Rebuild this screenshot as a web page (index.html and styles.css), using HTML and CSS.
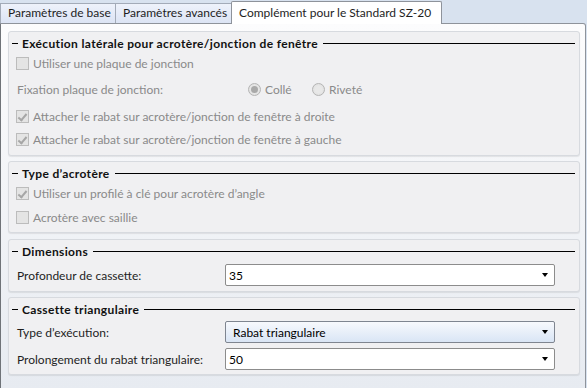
FILE: index.html
```html
<!DOCTYPE html>
<html lang="fr">
<head>
    <meta charset="UTF-8">
    <title>Complément pour le Standard SZ-20</title>
    <link rel="stylesheet" href="styles.css">
</head>
<body>
    <div class="tabs">
        <div class="tab t1">Paramètres de base</div>
        <div class="tab t2">Paramètres avancés</div>
        <div class="tab t3 active">Complément pour le Standard SZ-20</div>
    </div>
    <div class="panel">
        <section class="group g1">
            <div class="group-head"><span class="dash"></span><span class="title">Exécution latérale pour acrotère/jonction de fenêtre</span><span class="rule"></span></div>
            <div class="row check r-a"><span class="box"></span><span class="off">Utiliser une plaque de jonction</span></div>
            <div class="row field r-b">
                <span class="label off">Fixation plaque de jonction:</span>
                <span class="radio on"></span><span class="off radio-text">Collé</span>
                <span class="radio"></span><span class="off radio-text">Riveté</span>
            </div>
            <div class="row check r-c"><span class="box checked"></span><span class="off">Attacher le rabat sur acrotère/jonction de fenêtre à droite</span></div>
            <div class="row check r-d"><span class="box checked"></span><span class="off">Attacher le rabat sur acrotère/jonction de fenêtre à gauche</span></div>
        </section>

        <section class="group g2">
            <div class="group-head"><span class="dash"></span><span class="title">Type d’acrotère</span><span class="rule"></span></div>
            <div class="row check r-a"><span class="box checked"></span><span class="off">Utiliser un profilé à clé pour acrotère d’angle</span></div>
            <div class="row check r-e"><span class="box"></span><span class="off">Acrotère avec saillie</span></div>
        </section>

        <section class="group g3">
            <div class="group-head"><span class="dash"></span><span class="title">Dimensions</span><span class="rule"></span></div>
            <div class="row field sel-row">
                <span class="label">Profondeur de cassette:</span>
                <div class="combo"><span class="value">35</span><span class="arrow"></span></div>
            </div>
        </section>

        <section class="group g4">
            <div class="group-head"><span class="dash"></span><span class="title">Cassette triangulaire</span><span class="rule"></span></div>
            <div class="row field sel-row">
                <span class="label">Type d’exécution:</span>
                <div class="combo list"><span class="value">Rabat triangulaire</span><span class="arrow"></span></div>
            </div>
            <div class="row field sel-row second">
                <span class="label">Prolongement du rabat triangulaire:</span>
                <div class="combo"><span class="value">50</span><span class="arrow"></span></div>
            </div>
        </section>
    </div>
</body>
</html>
```

FILE: styles.css
```css
body {
    margin: 0;
    font-family: "Lato", "Open Sans", sans-serif;
    font-size: 12px;
    color: #1e1e1e;
    background: #d8e2ef;
    width: 587px;
    height: 388px;
    overflow: hidden;
}
.tabs {
    display: flex;
    align-items: flex-end;
    height: 23px;
}
.tab {
    box-sizing: border-box;
    height: 20px;
    line-height: 18px;
    padding-left: 7px;
    border: 1px solid #a3abb8;
    border-bottom: none;
    background: linear-gradient(#eef2fb, #dce4f4);
    color: #1e1e1e;
    white-space: nowrap;
}
.t1 {
    width: 116px;
}
.t2 {
    width: 117px;
    margin-left: -1px;
}
.t3 {
    width: 211px;
    margin-left: -1px;
}
.tab.active {
    position: relative;
    z-index: 1;
    height: 23px;
    margin-bottom: -1px;
    line-height: 21px;
    background: #fff;
    border-color: #8e939b;
    border-radius: 2px 2px 0 0;
}
.panel {
    box-sizing: border-box;
    width: 586px;
    height: 366px;
    border: 1px solid #8e939b;
    border-left-color: #6f7378;
    border-radius: 0 3px 0 0;
    background: linear-gradient(#fcfcfd, #e7ebf1);
    padding: 7px 5px 0 7px;
}
.group {
    box-sizing: border-box;
    border: 1px solid #d7dadf;
    border-radius: 3px;
    background: #f0f0f2;
    box-shadow: 0 1px 1px rgba(0, 0, 0, 0.08);
    margin-bottom: 5px;
}
.g1 {
    height: 125px;
}
.g2 {
    height: 72px;
    margin-bottom: 6px;
}
.g3 {
    height: 53px;
}
.g4 {
    height: 78px;
}
.group-head {
    display: flex;
    align-items: center;
    height: 22px;
    font-weight: bold;
    letter-spacing: 0.35px;
    color: #111;
}
.dash {
    width: 6px;
    height: 1px;
    background: #000;
    margin-left: 3px;
    margin-right: 4px;
}
.rule {
    flex: 1;
    height: 1px;
    background: #000;
    margin-left: 5px;
    margin-right: 4px;
}
.row {
    display: flex;
    align-items: center;
    white-space: nowrap;
}
.check {
    padding-left: 7px;
}
.field {
    padding-left: 8px;
}
.off {
    color: #8a8a8a;
}
.r-a {
    height: 18px;
}
.r-b {
    height: 24px;
    margin-top: 5px;
}
.r-c {
    height: 24px;
    margin-top: 3px;
}
.r-d {
    height: 22px;
}
.r-e {
    height: 22px;
    margin-top: 4px;
}
.box {
    box-sizing: border-box;
    width: 13px;
    height: 13px;
    border: 1px solid #bcbcbc;
    background: #e4e4e4;
    margin-right: 4px;
    position: relative;
}
.box.checked::after {
    content: "";
    position: absolute;
    left: 3px;
    top: 1px;
    width: 3px;
    height: 7px;
    border: solid #a6a6a6;
    border-width: 0 2px 2px 0;
    transform: rotate(40deg);
}
.label {
    width: 208px;
}
.r-b .label {
    width: 231px;
}
.radio {
    box-sizing: border-box;
    width: 13px;
    height: 13px;
    border: 1px solid #b4b4b4;
    border-radius: 50%;
    background: radial-gradient(circle, #e8e8e8 40%, #dcdcdc 100%);
    margin-right: 4px;
    position: relative;
}
.radio.on::after {
    content: "";
    position: absolute;
    left: 2px;
    top: 2px;
    width: 7px;
    height: 7px;
    border-radius: 50%;
    background: #a9a9a9;
}
.radio-text {
    width: 47px;
}
.sel-row {
    height: 22px;
    margin-top: 2px;
}
.g4 .sel-row {
    margin-top: 1px;
}
.g4 .sel-row.second {
    margin-top: 5px;
}
.combo {
    box-sizing: border-box;
    display: flex;
    align-items: center;
    width: 330px;
    height: 22px;
    border: 1px solid #8c8c8c;
    border-radius: 2px;
    background: #fff;
    padding-left: 3px;
}
.combo.list {
    background: linear-gradient(#f7f9fd, #d9e5f5);
    border-color: #7f8590;
    padding-left: 7px;
}
.value {
    flex: 1;
    color: #000;
}
.arrow {
    width: 0;
    height: 0;
    border-left: 3px solid transparent;
    border-right: 3px solid transparent;
    border-top: 4px solid #000;
    margin-right: 6px;
}
```
